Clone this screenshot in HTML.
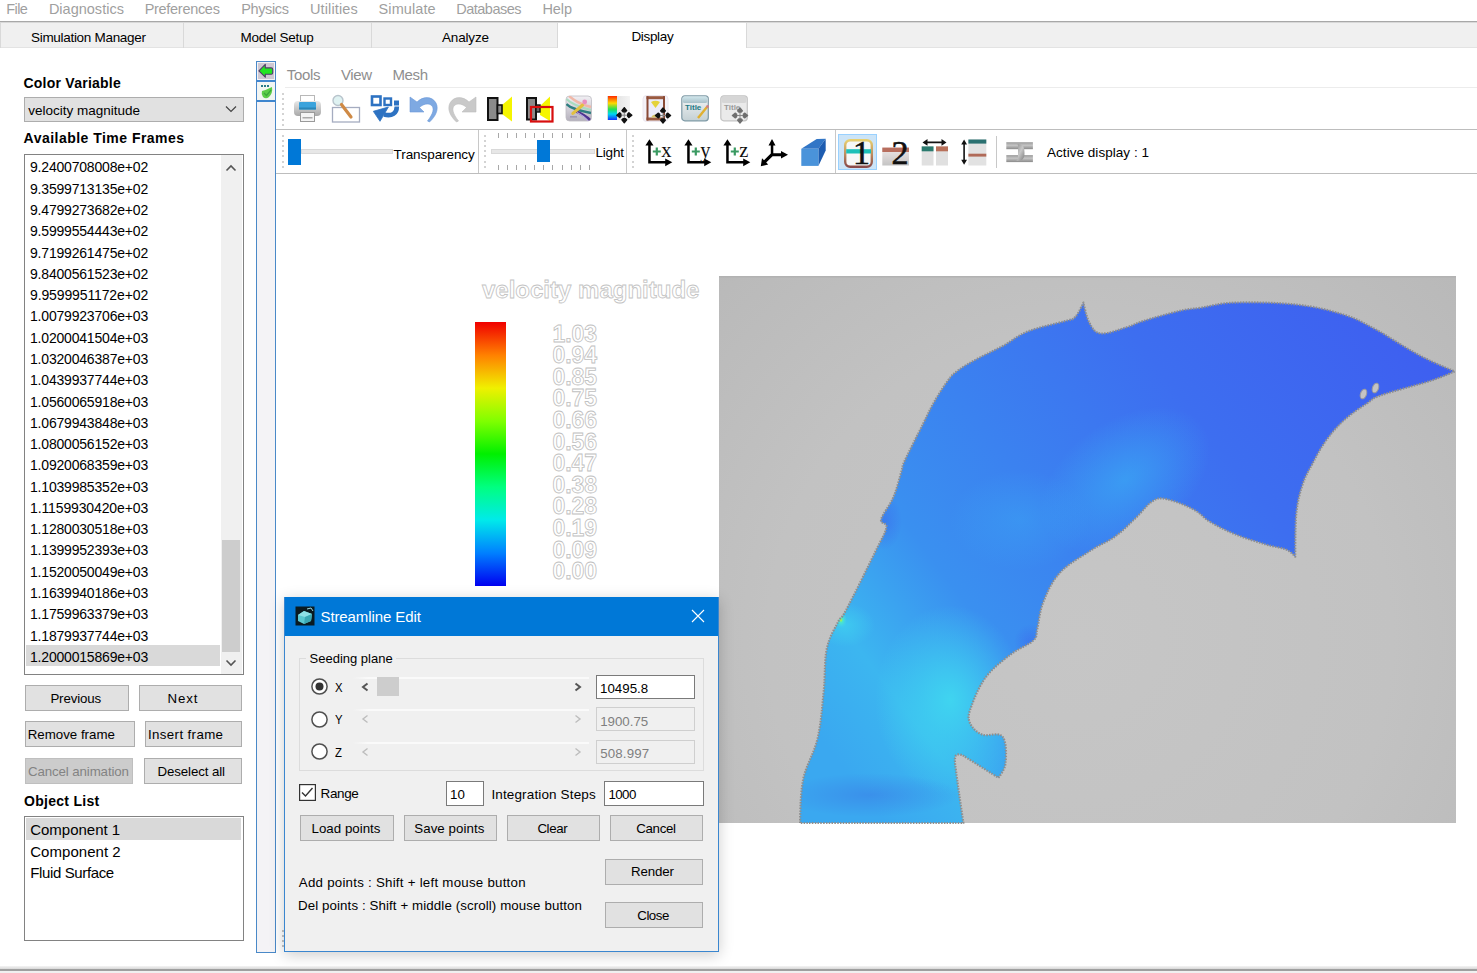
<!DOCTYPE html>
<html><head><meta charset="utf-8"><style>
html,body{margin:0;padding:0;}
body{width:1477px;height:973px;overflow:hidden;position:relative;background:#fff;font-family:"Liberation Sans", sans-serif;}
div{box-sizing:border-box;}
svg{position:absolute;overflow:visible;}
</style></head><body>
<div style="position:absolute;left:6.2px;top:1.53px;font-size:14.5px;line-height:14.5px;color:#9f9f9f;font-weight:normal;white-space:pre;letter-spacing:-0.558px;">File</div>
<div style="position:absolute;left:48.9px;top:1.53px;font-size:14.5px;line-height:14.5px;color:#9f9f9f;font-weight:normal;white-space:pre;letter-spacing:0.005px;">Diagnostics</div>
<div style="position:absolute;left:144.7px;top:1.53px;font-size:14.5px;line-height:14.5px;color:#9f9f9f;font-weight:normal;white-space:pre;letter-spacing:-0.299px;">Preferences</div>
<div style="position:absolute;left:241.2px;top:1.53px;font-size:14.5px;line-height:14.5px;color:#9f9f9f;font-weight:normal;white-space:pre;letter-spacing:-0.361px;">Physics</div>
<div style="position:absolute;left:310.0px;top:1.53px;font-size:14.5px;line-height:14.5px;color:#9f9f9f;font-weight:normal;white-space:pre;letter-spacing:0.121px;">Utilities</div>
<div style="position:absolute;left:378.6px;top:1.53px;font-size:14.5px;line-height:14.5px;color:#9f9f9f;font-weight:normal;white-space:pre;letter-spacing:0.083px;">Simulate</div>
<div style="position:absolute;left:456.2px;top:1.53px;font-size:14.5px;line-height:14.5px;color:#9f9f9f;font-weight:normal;white-space:pre;letter-spacing:-0.491px;">Databases</div>
<div style="position:absolute;left:542.5px;top:1.53px;font-size:14.5px;line-height:14.5px;color:#9f9f9f;font-weight:normal;white-space:pre;letter-spacing:-0.109px;">Help</div>
<div style="position:absolute;left:0px;top:21px;width:1477px;height:1px;background:#a8a8a8"></div>
<div style="position:absolute;left:0px;top:22px;width:1477px;height:1px;background:#d8d8d8"></div>
<div style="position:absolute;left:0px;top:23px;width:1477px;height:25px;background:#f0f0f0"></div>
<div style="position:absolute;left:0px;top:47px;width:558px;height:1px;background:#e3e3e3"></div>
<div style="position:absolute;left:746px;top:47px;width:731px;height:1px;background:#e3e3e3"></div>
<div style="position:absolute;left:0px;top:23px;width:1px;height:25px;background:#d9d9d9"></div>
<div style="position:absolute;left:183px;top:23px;width:1px;height:25px;background:#d9d9d9"></div>
<div style="position:absolute;left:371px;top:23px;width:1px;height:25px;background:#d9d9d9"></div>
<div style="position:absolute;left:558px;top:23px;width:188px;height:26px;background:#fff"></div>
<div style="position:absolute;left:557px;top:23px;width:1px;height:25px;background:#d9d9d9"></div>
<div style="position:absolute;left:746px;top:23px;width:1px;height:25px;background:#d9d9d9"></div>
<div style="position:absolute;left:31px;top:30.57px;font-size:13.5px;line-height:13.5px;color:#000;font-weight:normal;white-space:pre;letter-spacing:-0.299px;">Simulation Manager</div>
<div style="position:absolute;left:240.6px;top:30.57px;font-size:13.5px;line-height:13.5px;color:#000;font-weight:normal;white-space:pre;letter-spacing:-0.261px;">Model Setup</div>
<div style="position:absolute;left:442px;top:30.57px;font-size:13.5px;line-height:13.5px;color:#000;font-weight:normal;white-space:pre;letter-spacing:-0.172px;">Analyze</div>
<div style="position:absolute;left:631.4px;top:29.77px;font-size:13.5px;line-height:13.5px;color:#000;font-weight:normal;white-space:pre;letter-spacing:-0.328px;">Display</div>
<div style="position:absolute;left:23.4px;top:75.65px;font-size:14px;line-height:14px;color:#000;font-weight:bold;white-space:pre;letter-spacing:0.250px;">Color Variable</div>
<div style="position:absolute;left:24px;top:97px;width:220px;height:25px;background:#e1e1e1;border:1px solid #adadad"></div>
<div style="position:absolute;left:28.2px;top:104.07px;font-size:13.5px;line-height:13.5px;color:#000;font-weight:normal;white-space:pre;letter-spacing:-0.001px;">velocity magnitude</div>
<svg style="left:225px;top:105px" width="12" height="8"><polyline points="1,1.5 6,6.5 11,1.5" fill="none" stroke="#444" stroke-width="1.2"/></svg>
<div style="position:absolute;left:23.6px;top:131.45px;font-size:14px;line-height:14px;color:#000;font-weight:bold;white-space:pre;letter-spacing:0.477px;">Available Time Frames</div>
<div style="position:absolute;left:24px;top:154px;width:220px;height:521px;background:#fff;border:1px solid #828282"></div>
<div style="position:absolute;left:221px;top:155px;width:21px;height:519px;background:#f0f0f0"></div>
<div style="position:absolute;left:222px;top:540px;width:18px;height:112px;background:#cdcdcd"></div>
<svg style="left:225px;top:164px" width="12" height="8"><polyline points="1.5,6.5 6,2 10.5,6.5" fill="none" stroke="#555" stroke-width="1.6"/></svg>
<svg style="left:225px;top:659px" width="12" height="8"><polyline points="1.5,1.5 6,6 10.5,1.5" fill="none" stroke="#555" stroke-width="1.6"/></svg>
<div style="position:absolute;left:26px;top:645px;width:194px;height:21px;background:#d9d9d9"></div>
<div style="position:absolute;left:30px;top:160.45px;font-size:14px;line-height:14px;color:#000;font-weight:normal;white-space:pre;letter-spacing:-0.192px;">9.2400708008e+02</div>
<div style="position:absolute;left:30px;top:181.73px;font-size:14px;line-height:14px;color:#000;font-weight:normal;white-space:pre;letter-spacing:-0.192px;">9.3599713135e+02</div>
<div style="position:absolute;left:30px;top:203.01px;font-size:14px;line-height:14px;color:#000;font-weight:normal;white-space:pre;letter-spacing:-0.192px;">9.4799273682e+02</div>
<div style="position:absolute;left:30px;top:224.29px;font-size:14px;line-height:14px;color:#000;font-weight:normal;white-space:pre;letter-spacing:-0.192px;">9.5999554443e+02</div>
<div style="position:absolute;left:30px;top:245.57px;font-size:14px;line-height:14px;color:#000;font-weight:normal;white-space:pre;letter-spacing:-0.192px;">9.7199261475e+02</div>
<div style="position:absolute;left:30px;top:266.85px;font-size:14px;line-height:14px;color:#000;font-weight:normal;white-space:pre;letter-spacing:-0.192px;">9.8400561523e+02</div>
<div style="position:absolute;left:30px;top:288.13px;font-size:14px;line-height:14px;color:#000;font-weight:normal;white-space:pre;letter-spacing:-0.123px;">9.9599951172e+02</div>
<div style="position:absolute;left:30px;top:309.41px;font-size:14px;line-height:14px;color:#000;font-weight:normal;white-space:pre;letter-spacing:-0.192px;">1.0079923706e+03</div>
<div style="position:absolute;left:30px;top:330.69px;font-size:14px;line-height:14px;color:#000;font-weight:normal;white-space:pre;letter-spacing:-0.192px;">1.0200041504e+03</div>
<div style="position:absolute;left:30px;top:351.97px;font-size:14px;line-height:14px;color:#000;font-weight:normal;white-space:pre;letter-spacing:-0.192px;">1.0320046387e+03</div>
<div style="position:absolute;left:30px;top:373.25px;font-size:14px;line-height:14px;color:#000;font-weight:normal;white-space:pre;letter-spacing:-0.192px;">1.0439937744e+03</div>
<div style="position:absolute;left:30px;top:394.53px;font-size:14px;line-height:14px;color:#000;font-weight:normal;white-space:pre;letter-spacing:-0.192px;">1.0560065918e+03</div>
<div style="position:absolute;left:30px;top:415.81px;font-size:14px;line-height:14px;color:#000;font-weight:normal;white-space:pre;letter-spacing:-0.192px;">1.0679943848e+03</div>
<div style="position:absolute;left:30px;top:437.09px;font-size:14px;line-height:14px;color:#000;font-weight:normal;white-space:pre;letter-spacing:-0.192px;">1.0800056152e+03</div>
<div style="position:absolute;left:30px;top:458.37px;font-size:14px;line-height:14px;color:#000;font-weight:normal;white-space:pre;letter-spacing:-0.192px;">1.0920068359e+03</div>
<div style="position:absolute;left:30px;top:479.65px;font-size:14px;line-height:14px;color:#000;font-weight:normal;white-space:pre;letter-spacing:-0.192px;">1.1039985352e+03</div>
<div style="position:absolute;left:30px;top:500.93px;font-size:14px;line-height:14px;color:#000;font-weight:normal;white-space:pre;letter-spacing:-0.123px;">1.1159930420e+03</div>
<div style="position:absolute;left:30px;top:522.21px;font-size:14px;line-height:14px;color:#000;font-weight:normal;white-space:pre;letter-spacing:-0.192px;">1.1280030518e+03</div>
<div style="position:absolute;left:30px;top:543.49px;font-size:14px;line-height:14px;color:#000;font-weight:normal;white-space:pre;letter-spacing:-0.192px;">1.1399952393e+03</div>
<div style="position:absolute;left:30px;top:564.77px;font-size:14px;line-height:14px;color:#000;font-weight:normal;white-space:pre;letter-spacing:-0.192px;">1.1520050049e+03</div>
<div style="position:absolute;left:30px;top:586.05px;font-size:14px;line-height:14px;color:#000;font-weight:normal;white-space:pre;letter-spacing:-0.192px;">1.1639940186e+03</div>
<div style="position:absolute;left:30px;top:607.33px;font-size:14px;line-height:14px;color:#000;font-weight:normal;white-space:pre;letter-spacing:-0.192px;">1.1759963379e+03</div>
<div style="position:absolute;left:30px;top:628.61px;font-size:14px;line-height:14px;color:#000;font-weight:normal;white-space:pre;letter-spacing:-0.192px;">1.1879937744e+03</div>
<div style="position:absolute;left:30px;top:649.89px;font-size:14px;line-height:14px;color:#000;font-weight:normal;white-space:pre;letter-spacing:-0.192px;">1.2000015869e+03</div>
<div style="position:absolute;left:25px;top:685px;width:104px;height:26px;background:#e1e1e1;border:1px solid #adadad"></div>
<div style="position:absolute;left:50.4px;top:692.24px;font-size:13.3px;line-height:13.3px;color:#000;font-weight:normal;white-space:pre;letter-spacing:-0.148px;">Previous</div>
<div style="position:absolute;left:139px;top:685px;width:103px;height:26px;background:#e1e1e1;border:1px solid #adadad"></div>
<div style="position:absolute;left:167.5px;top:692.24px;font-size:13.3px;line-height:13.3px;color:#000;font-weight:normal;white-space:pre;letter-spacing:0.885px;">Next</div>
<div style="position:absolute;left:25px;top:721px;width:110px;height:26px;background:#e1e1e1;border:1px solid #adadad"></div>
<div style="position:absolute;left:27.7px;top:728.24px;font-size:13.3px;line-height:13.3px;color:#000;font-weight:normal;white-space:pre;letter-spacing:-0.000px;">Remove frame</div>
<div style="position:absolute;left:145px;top:721px;width:97px;height:26px;background:#e1e1e1;border:1px solid #adadad"></div>
<div style="position:absolute;left:148px;top:728.24px;font-size:13.3px;line-height:13.3px;color:#000;font-weight:normal;white-space:pre;letter-spacing:0.368px;">Insert frame</div>
<div style="position:absolute;left:25px;top:758px;width:108px;height:26px;background:#cccccc;border:1px solid #bfbfbf"></div>
<div style="position:absolute;left:28px;top:765.24px;font-size:13.3px;line-height:13.3px;color:#838383;font-weight:normal;white-space:pre;letter-spacing:-0.117px;">Cancel animation</div>
<div style="position:absolute;left:144px;top:758px;width:98px;height:26px;background:#e1e1e1;border:1px solid #adadad"></div>
<div style="position:absolute;left:157.5px;top:765.24px;font-size:13.3px;line-height:13.3px;color:#000;font-weight:normal;white-space:pre;letter-spacing:-0.112px;">Deselect all</div>
<div style="position:absolute;left:24px;top:794.15px;font-size:14px;line-height:14px;color:#000;font-weight:bold;white-space:pre;letter-spacing:0.294px;">Object List</div>
<div style="position:absolute;left:24px;top:816px;width:220px;height:125px;background:#fff;border:1px solid #828282"></div>
<div style="position:absolute;left:26px;top:818px;width:215px;height:22px;background:#d9d9d9"></div>
<div style="position:absolute;left:30.2px;top:822.30px;font-size:15px;line-height:15px;color:#000;font-weight:normal;white-space:pre;letter-spacing:-0.006px;">Component 1</div>
<div style="position:absolute;left:30.2px;top:843.50px;font-size:15px;line-height:15px;color:#000;font-weight:normal;white-space:pre;letter-spacing:0.044px;">Component 2</div>
<div style="position:absolute;left:30.2px;top:864.70px;font-size:15px;line-height:15px;color:#000;font-weight:normal;white-space:pre;letter-spacing:-0.365px;">Fluid Surface</div>
<div style="position:absolute;left:256px;top:61px;width:20px;height:892px;background:#f4f3f6;border:1px solid #4a89c8"></div>
<svg style="left:257px;top:62px" width="18" height="18"><rect x="1" y="1" width="16" height="16" fill="#cfc8d2"/><path d="M1.9,8.8 L8.3,2.4 L8.3,5.9 L14.2,5.9 Q15.7,5.9 15.7,7.4 L15.7,10.8 Q15.7,12.3 14.2,12.3 L8.3,12.3 L8.3,15.2 Z" fill="#22e622" stroke="#503a6a" stroke-width="1.1" stroke-linejoin="round"/></svg>
<div style="position:absolute;left:257px;top:80px;width:18px;height:2px;background:#3f86cf"></div>
<svg style="left:257px;top:82px" width="18" height="18"><rect x="1" y="1" width="16" height="17" fill="#f2f6f2"/><path d="M4,4 L13,4" stroke="#2a7a8a" stroke-width="2" stroke-dasharray="2 1"/><path d="M5,9 Q9,8 15,5 Q16,11 12,15 Q9,17.5 6,15 Q4,12 5,9 Z" fill="#5ccc48"/><path d="M7,11 L9.5,13.5 L14,8" stroke="#3aa83a" stroke-width="1.2" fill="none"/></svg>
<div style="position:absolute;left:257px;top:100px;width:18px;height:2px;background:#3f86cf"></div>
<div style="position:absolute;left:286.7px;top:66.90px;font-size:15px;line-height:15px;color:#8e8e8e;font-weight:normal;white-space:pre;letter-spacing:-0.283px;">Tools</div>
<div style="position:absolute;left:340.9px;top:66.90px;font-size:15px;line-height:15px;color:#8e8e8e;font-weight:normal;white-space:pre;letter-spacing:-0.317px;">View</div>
<div style="position:absolute;left:392.5px;top:66.90px;font-size:15px;line-height:15px;color:#8e8e8e;font-weight:normal;white-space:pre;letter-spacing:-0.396px;">Mesh</div>
<div style="position:absolute;left:285px;top:87px;width:1192px;height:1px;background:#ececec"></div>
<div style="position:absolute;left:276px;top:129px;width:1201px;height:1px;background:#bdbdbd"></div>
<div style="position:absolute;left:276px;top:173px;width:1201px;height:1px;background:#bdbdbd"></div>
<div style="position:absolute;left:281.5px;top:93.0px;width:2px;height:2px;background:#c4c4c4;border-radius:1px"></div>
<div style="position:absolute;left:281.5px;top:98.1px;width:2px;height:2px;background:#c4c4c4;border-radius:1px"></div>
<div style="position:absolute;left:281.5px;top:103.2px;width:2px;height:2px;background:#c4c4c4;border-radius:1px"></div>
<div style="position:absolute;left:281.5px;top:108.3px;width:2px;height:2px;background:#c4c4c4;border-radius:1px"></div>
<div style="position:absolute;left:281.5px;top:113.4px;width:2px;height:2px;background:#c4c4c4;border-radius:1px"></div>
<div style="position:absolute;left:281.5px;top:118.5px;width:2px;height:2px;background:#c4c4c4;border-radius:1px"></div>
<div style="position:absolute;left:281.5px;top:123.6px;width:2px;height:2px;background:#c4c4c4;border-radius:1px"></div>
<div style="position:absolute;left:281.5px;top:135.0px;width:2px;height:2px;background:#c4c4c4;border-radius:1px"></div>
<div style="position:absolute;left:281.5px;top:140.1px;width:2px;height:2px;background:#c4c4c4;border-radius:1px"></div>
<div style="position:absolute;left:281.5px;top:145.2px;width:2px;height:2px;background:#c4c4c4;border-radius:1px"></div>
<div style="position:absolute;left:281.5px;top:150.3px;width:2px;height:2px;background:#c4c4c4;border-radius:1px"></div>
<div style="position:absolute;left:281.5px;top:155.4px;width:2px;height:2px;background:#c4c4c4;border-radius:1px"></div>
<div style="position:absolute;left:281.5px;top:160.5px;width:2px;height:2px;background:#c4c4c4;border-radius:1px"></div>
<div style="position:absolute;left:281.5px;top:165.6px;width:2px;height:2px;background:#c4c4c4;border-radius:1px"></div>
<div style="position:absolute;left:483.5px;top:135.0px;width:2px;height:2px;background:#c4c4c4;border-radius:1px"></div>
<div style="position:absolute;left:483.5px;top:140.1px;width:2px;height:2px;background:#c4c4c4;border-radius:1px"></div>
<div style="position:absolute;left:483.5px;top:145.2px;width:2px;height:2px;background:#c4c4c4;border-radius:1px"></div>
<div style="position:absolute;left:483.5px;top:150.3px;width:2px;height:2px;background:#c4c4c4;border-radius:1px"></div>
<div style="position:absolute;left:483.5px;top:155.4px;width:2px;height:2px;background:#c4c4c4;border-radius:1px"></div>
<div style="position:absolute;left:483.5px;top:160.5px;width:2px;height:2px;background:#c4c4c4;border-radius:1px"></div>
<div style="position:absolute;left:483.5px;top:165.6px;width:2px;height:2px;background:#c4c4c4;border-radius:1px"></div>
<div style="position:absolute;left:632px;top:135.0px;width:2px;height:2px;background:#c4c4c4;border-radius:1px"></div>
<div style="position:absolute;left:632px;top:140.1px;width:2px;height:2px;background:#c4c4c4;border-radius:1px"></div>
<div style="position:absolute;left:632px;top:145.2px;width:2px;height:2px;background:#c4c4c4;border-radius:1px"></div>
<div style="position:absolute;left:632px;top:150.3px;width:2px;height:2px;background:#c4c4c4;border-radius:1px"></div>
<div style="position:absolute;left:632px;top:155.4px;width:2px;height:2px;background:#c4c4c4;border-radius:1px"></div>
<div style="position:absolute;left:632px;top:160.5px;width:2px;height:2px;background:#c4c4c4;border-radius:1px"></div>
<div style="position:absolute;left:632px;top:165.6px;width:2px;height:2px;background:#c4c4c4;border-radius:1px"></div>
<div style="position:absolute;left:477.5px;top:130px;width:1px;height:43px;background:#c8c8c8"></div>
<div style="position:absolute;left:626px;top:130px;width:1px;height:43px;background:#c8c8c8"></div>
<div style="position:absolute;left:835px;top:130px;width:1px;height:43px;background:#c8c8c8"></div>
<div style="position:absolute;left:996px;top:136px;width:1px;height:32px;background:#c8c8c8"></div>
<div style="position:absolute;left:301px;top:149px;width:92px;height:5px;background:#e7e7e7;border:1px solid #d9d9d9"></div>
<div style="position:absolute;left:288px;top:139px;width:13px;height:26px;background:#0078d7"></div>
<div style="position:absolute;left:393.6px;top:147.57px;font-size:13.5px;line-height:13.5px;color:#000;font-weight:normal;white-space:pre;letter-spacing:-0.077px;">Transparency</div>
<div style="position:absolute;left:497.5px;top:133px;width:1px;height:5px;background:#a8a8a8"></div>
<div style="position:absolute;left:497.5px;top:165px;width:1px;height:5px;background:#a8a8a8"></div>
<div style="position:absolute;left:506.65px;top:133px;width:1px;height:5px;background:#a8a8a8"></div>
<div style="position:absolute;left:506.65px;top:165px;width:1px;height:5px;background:#a8a8a8"></div>
<div style="position:absolute;left:515.8px;top:133px;width:1px;height:5px;background:#a8a8a8"></div>
<div style="position:absolute;left:515.8px;top:165px;width:1px;height:5px;background:#a8a8a8"></div>
<div style="position:absolute;left:524.95px;top:133px;width:1px;height:5px;background:#a8a8a8"></div>
<div style="position:absolute;left:524.95px;top:165px;width:1px;height:5px;background:#a8a8a8"></div>
<div style="position:absolute;left:534.1px;top:133px;width:1px;height:5px;background:#a8a8a8"></div>
<div style="position:absolute;left:534.1px;top:165px;width:1px;height:5px;background:#a8a8a8"></div>
<div style="position:absolute;left:543.25px;top:133px;width:1px;height:5px;background:#a8a8a8"></div>
<div style="position:absolute;left:543.25px;top:165px;width:1px;height:5px;background:#a8a8a8"></div>
<div style="position:absolute;left:552.4px;top:133px;width:1px;height:5px;background:#a8a8a8"></div>
<div style="position:absolute;left:552.4px;top:165px;width:1px;height:5px;background:#a8a8a8"></div>
<div style="position:absolute;left:561.55px;top:133px;width:1px;height:5px;background:#a8a8a8"></div>
<div style="position:absolute;left:561.55px;top:165px;width:1px;height:5px;background:#a8a8a8"></div>
<div style="position:absolute;left:570.7px;top:133px;width:1px;height:5px;background:#a8a8a8"></div>
<div style="position:absolute;left:570.7px;top:165px;width:1px;height:5px;background:#a8a8a8"></div>
<div style="position:absolute;left:579.85px;top:133px;width:1px;height:5px;background:#a8a8a8"></div>
<div style="position:absolute;left:579.85px;top:165px;width:1px;height:5px;background:#a8a8a8"></div>
<div style="position:absolute;left:589.0px;top:133px;width:1px;height:5px;background:#a8a8a8"></div>
<div style="position:absolute;left:589.0px;top:165px;width:1px;height:5px;background:#a8a8a8"></div>
<div style="position:absolute;left:491px;top:149px;width:104px;height:5px;background:#e7e7e7;border:1px solid #d9d9d9"></div>
<div style="position:absolute;left:537px;top:140px;width:13px;height:22px;background:#0078d7"></div>
<div style="position:absolute;left:595.5px;top:145.87px;font-size:13.5px;line-height:13.5px;color:#000;font-weight:normal;white-space:pre;letter-spacing:-0.195px;">Light</div>
<div style="position:absolute;left:838px;top:134px;width:39px;height:36px;background:#cce4f7;border:1px solid #99d1ff"></div>
<div style="position:absolute;left:1047px;top:145.77px;font-size:13.5px;line-height:13.5px;color:#000;font-weight:normal;white-space:pre;letter-spacing:0.041px;">Active display : 1</div>
<svg style="left:293px;top:94px" width="30" height="30">
<defs><linearGradient id="pb" x1="0" y1="0" x2="0" y2="1"><stop offset="0" stop-color="#e8e8e8"/><stop offset="1" stop-color="#a8a8a8"/></linearGradient></defs>
<rect x="7.5" y="1.5" width="14" height="8" fill="#fff" stroke="#b8b8b8"/>
<rect x="1" y="7" width="27" height="15" rx="4" fill="url(#pb)"/>
<rect x="6" y="8" width="17" height="7.5" rx="1" fill="#3ba3dc"/>
<rect x="6" y="13.5" width="17" height="2" fill="#2a86b8"/>
<rect x="7.5" y="18.5" width="14" height="9" fill="#f4f4f4" stroke="#9a9a9a"/>
<rect x="9.5" y="23" width="10" height="1.5" fill="#aaa"/>
</svg>
<svg style="left:331px;top:94px" width="30" height="30">
<rect x="1.5" y="13.5" width="27" height="14.5" fill="#fff" stroke="#a5acc0" stroke-width="1.3"/>
<circle cx="7" cy="6.5" r="5" fill="#dff2f2" stroke="#b8c4cc" stroke-width="1.4"/>
<line x1="10.5" y1="10.5" x2="20" y2="23" stroke="#cf8a45" stroke-width="3.2" stroke-linecap="round"/>
</svg>
<svg style="left:370px;top:94px" width="30" height="30">
<rect x="2" y="2.5" width="8.5" height="8.5" fill="none" stroke="#2d72c2" stroke-width="2.6"/>
<rect x="14.5" y="4.5" width="6.5" height="6.5" fill="none" stroke="#2d72c2" stroke-width="2.4"/>
<rect x="24" y="6.5" width="5" height="5" fill="#2d72c2"/>
<path d="M26.8,12.5 C26.8,19.5 22,22.5 14,20.5" fill="none" stroke="#2d72c2" stroke-width="4.6"/><polygon points="3.3,17.3 18.4,13 10,27.3" fill="#2d72c2" stroke="#2d72c2" stroke-width="0.8" stroke-linejoin="round"/>
</svg>
<svg style="left:409px;top:95px" width="30" height="28">
<path d="M1,2 L1,17 L15,17 L10.5,12.5 C14,9 19,8 22,10 C26,13 24,19 18.5,26 L20.5,27 C27,21 30,14 27,8 C23,1 14,1 8,7 Z" fill="#7ea9e2" stroke="#6b98d8" stroke-width="0.6"/>
</svg>
<svg style="left:447px;top:95px" width="30" height="28">
<path d="M29,2 L29,17 L15,17 L19.5,12.5 C16,9 11,8 8,10 C4,13 6,19 11.5,26 L9.5,27 C3,21 0,14 3,8 C7,1 16,1 22,7 Z" fill="#c9c9c9" stroke="#bdbdbd" stroke-width="0.6"/>
</svg>
<svg style="left:486px;top:95px" width="28" height="28">
<polygon points="16,10 26,1.5 26,26.5 16,19" fill="#f5f500"/>
<rect x="2" y="3" width="9.5" height="22" fill="#8a8a8a" stroke="#111" stroke-width="2"/>
<rect x="11.5" y="10" width="4.5" height="8.5" fill="#8a8a8a" stroke="#111" stroke-width="1.6"/>
</svg>
<svg style="left:525px;top:95px" width="30" height="30">
<polygon points="15,11 25,1.5 25,26 15,20" fill="#f5f500"/>
<rect x="2" y="3" width="9" height="21.5" fill="#8a8a8a" stroke="#111" stroke-width="2"/>
<rect x="11" y="10" width="4" height="7" fill="#666" stroke="#111" stroke-width="1.4"/>
<rect x="6" y="12" width="21.5" height="14.5" fill="none" stroke="#d80e0e" stroke-width="2.2"/>
</svg>
<svg style="left:565px;top:95px" width="28" height="28">
<defs><linearGradient id="sg" x1="0" y1="0" x2="0" y2="1"><stop offset="0" stop-color="#f2f0f4"/><stop offset="1" stop-color="#b4b0bc"/></linearGradient>
<clipPath id="sgc"><rect x="1" y="1" width="25.5" height="25" rx="3.5"/></clipPath></defs>
<rect x="1" y="1" width="25.5" height="25" rx="3.5" fill="url(#sg)" stroke="#bdbbc2" stroke-width="0.8"/>
<g clip-path="url(#sgc)" fill="none">
<path d="M4,1 C9,5 14,9 26,12" stroke="#f0b8a8" stroke-width="2.4"/>
<path d="M1.5,4 C6,9 14,12 26,15" stroke="#a8dcc0" stroke-width="2.2"/>
<path d="M1.5,9 C5,13 12,15 26,18" stroke="#2e7e80" stroke-width="2.4"/>
<path d="M10,16 C15,18 20,20 25,25" stroke="#4e3290" stroke-width="2.6"/>
<path d="M12,17.5 C16,19.5 20,22 23,26" stroke="#b8a8e0" stroke-width="1.2"/>
</g>
<line x1="7.9" y1="18.4" x2="17.4" y2="10.2" stroke="#e2c040" stroke-width="3.2" stroke-linecap="round"/>
<circle cx="19.7" cy="6.9" r="2.4" fill="#e890c0"/>
<rect x="5" y="21" width="7" height="1.6" fill="#9088a8" opacity="0.7"/>
</svg>
<svg style="left:606px;top:94px" width="30" height="32">
<defs><linearGradient id="cg" x1="0" y1="0" x2="0" y2="1"><stop offset="0" stop-color="#ff2a00"/><stop offset="0.3" stop-color="#ffd800"/><stop offset="0.55" stop-color="#22e050"/><stop offset="0.75" stop-color="#00d8f0"/><stop offset="1" stop-color="#1030ff"/></linearGradient>
<linearGradient id="cgb" x1="0" y1="0" x2="1" y2="0"><stop offset="0" stop-color="#d8d8d8"/><stop offset="1" stop-color="#f4f4f4"/></linearGradient></defs>
<rect x="1" y="2" width="23" height="24" fill="url(#cgb)"/>
<rect x="2" y="2" width="9" height="24" fill="url(#cg)"/>
<g transform="translate(18.3,21.2) scale(1.0)"><path d="M-3.5,0 L3.5,0 M0,-3.5 L0,3.5" stroke="#888" stroke-width="1"/><path d="M0,-7.6 L2.4,-4.6 L1.2,-3.4 L-1.2,-3.4 L-2.4,-4.6 Z M0,7.6 L2.4,4.6 L1.2,3.4 L-1.2,3.4 L-2.4,4.6 Z M-7.6,0 L-4.6,2.4 L-3.4,1.2 L-3.4,-1.2 L-4.6,-2.4 Z M7.6,0 L4.6,2.4 L3.4,1.2 L3.4,-1.2 L4.6,-2.4 Z" fill="#111" stroke="#111" stroke-width="1.3" stroke-linejoin="round"/></g>
</svg>
<svg style="left:642px;top:94px" width="30" height="32">
<rect x="1" y="1.5" width="25" height="26" rx="3.5" fill="#f4f2f8" stroke="#ece6ee"/>
<rect x="6" y="4.5" width="15.5" height="20" fill="#ecebf8"/>
<rect x="4.5" y="2.2" width="18.5" height="3" fill="#9a5a40"/>
<rect x="4.5" y="23.5" width="18.5" height="3" fill="#9a5a40"/>
<rect x="4.5" y="2.2" width="2" height="24.3" fill="#8a4a36"/>
<rect x="21" y="2.2" width="2" height="24.3" fill="#8a4a36"/>
<path d="M9,8 Q13.5,5.5 18,8 L13.5,14 Z" fill="#e4d23a"/>
<path d="M9,23.5 Q12,17.5 19,23.5 Z" fill="#d8c468"/>
<g transform="translate(21,21.5) scale(1.0)"><path d="M-3.5,0 L3.5,0 M0,-3.5 L0,3.5" stroke="#888" stroke-width="1"/><path d="M0,-7.6 L2.4,-4.6 L1.2,-3.4 L-1.2,-3.4 L-2.4,-4.6 Z M0,7.6 L2.4,4.6 L1.2,3.4 L-1.2,3.4 L-2.4,4.6 Z M-7.6,0 L-4.6,2.4 L-3.4,1.2 L-3.4,-1.2 L-4.6,-2.4 Z M7.6,0 L4.6,2.4 L3.4,1.2 L3.4,-1.2 L4.6,-2.4 Z" fill="#111" stroke="#111" stroke-width="1.3" stroke-linejoin="round"/></g>
</svg>
<svg style="left:681px;top:95px" width="30" height="28">
<defs><linearGradient id="tg" x1="0" y1="0" x2="0" y2="1"><stop offset="0" stop-color="#cfe6ec"/><stop offset="1" stop-color="#a8c0c8"/></linearGradient>
<linearGradient id="tb" x1="0" y1="0" x2="0" y2="1"><stop offset="0" stop-color="#f4f6f6"/><stop offset="1" stop-color="#c4d0d4"/></linearGradient></defs>
<rect x="0.8" y="0.8" width="26.5" height="25" rx="3" fill="url(#tb)" stroke="#7f9aa6" stroke-width="1.2"/>
<rect x="1.5" y="1.5" width="25" height="6.5" rx="2" fill="url(#tg)"/>
<text x="4" y="15" font-family="Liberation Sans" font-weight="bold" font-size="8" fill="#1f7a86">Title</text>
<line x1="17" y1="23" x2="26" y2="12" stroke="#e0b030" stroke-width="2.4"/>
<circle cx="26.5" cy="11.5" r="1.5" fill="#d08080"/>
</svg>
<svg style="left:720px;top:95px" width="30" height="30">
<rect x="0.8" y="0.8" width="26.5" height="25" rx="3" fill="#eaeaea" stroke="#c4c4c4" stroke-width="1.2"/>
<rect x="1.5" y="1.5" width="25" height="6.5" rx="2" fill="#d6d6d6"/>
<text x="4" y="15" font-family="Liberation Sans" font-weight="bold" font-size="8" fill="#9a9a9a">Title</text>
<g transform="translate(20,20.5) scale(1.0)"><path d="M-3.5,0 L3.5,0 M0,-3.5 L0,3.5" stroke="#888" stroke-width="1"/><path d="M0,-7.6 L2.4,-4.6 L1.2,-3.4 L-1.2,-3.4 L-2.4,-4.6 Z M0,7.6 L2.4,4.6 L1.2,3.4 L-1.2,3.4 L-2.4,4.6 Z M-7.6,0 L-4.6,2.4 L-3.4,1.2 L-3.4,-1.2 L-4.6,-2.4 Z M7.6,0 L4.6,2.4 L3.4,1.2 L3.4,-1.2 L4.6,-2.4 Z" fill="#6f6f6f" stroke="#6f6f6f" stroke-width="1.3" stroke-linejoin="round"/></g>
</svg>
<svg style="left:643.5px;top:138px" width="30" height="30">
<path d="M5.45,1.3 L1.4,7.6 L4.2,7.6 L4.2,25.6 L21.2,25.6 L21.2,28.2 L28.3,24.3 L21.2,20.4 L21.2,23 L6.7,23 L6.7,7.6 L9.5,7.6 Z" fill="#000"/>
<path d="M8.8,13.5 L16.8,13.5 M12.8,9.4 L12.8,17.6" stroke="#3a9a62" stroke-width="2.2"/>
<text x="17.2" y="18.6" font-family="Liberation Serif" font-size="20.5" fill="#111">x</text>
</svg>
<svg style="left:682.5px;top:138px" width="30" height="30">
<path d="M5.45,1.3 L1.4,7.6 L4.2,7.6 L4.2,25.6 L21.2,25.6 L21.2,28.2 L28.3,24.3 L21.2,20.4 L21.2,23 L6.7,23 L6.7,7.6 L9.5,7.6 Z" fill="#000"/>
<path d="M8.8,13.5 L16.8,13.5 M12.8,9.4 L12.8,17.6" stroke="#3a9a62" stroke-width="2.2"/>
<text x="17.2" y="18.6" font-family="Liberation Serif" font-size="20.5" fill="#111">y</text>
</svg>
<svg style="left:721.5px;top:138px" width="30" height="30">
<path d="M5.45,1.3 L1.4,7.6 L4.2,7.6 L4.2,25.6 L21.2,25.6 L21.2,28.2 L28.3,24.3 L21.2,20.4 L21.2,23 L6.7,23 L6.7,7.6 L9.5,7.6 Z" fill="#000"/>
<path d="M8.8,13.5 L16.8,13.5 M12.8,9.4 L12.8,17.6" stroke="#3a9a62" stroke-width="2.2"/>
<text x="17.2" y="18.6" font-family="Liberation Serif" font-size="20.5" fill="#111">z</text>
</svg>
<svg style="left:760px;top:138px" width="30" height="30">
<path d="M12,1 L8.5,7.6 L10.8,7.6 L10.8,15.5 L4,22.3 L2,20.3 L0.8,28.2 L8.2,26.5 L6.2,24.5 L12.6,18.2 L21,18.2 L21,20.6 L28,16.8 L21,13 L21,15.3 L13.3,15.3 L13.3,7.6 L15.5,7.6 Z" fill="#000"/>
</svg>
<svg style="left:799px;top:138px" width="30" height="30">
<polygon points="2.3,10.8 17.7,1.1 26.7,0.7 19.4,10.8" fill="#3276c6"/>
<polygon points="19.4,10.8 26.7,0.7 26.7,12.5 19.4,27.9" fill="#1d5cb0"/>
<rect x="2.3" y="10.8" width="17.1" height="17.1" fill="#4a93da"/>
</svg>
<svg style="left:840px;top:136px" width="36" height="34">
<defs><linearGradient id="d1" x1="0" y1="0" x2="0" y2="1"><stop offset="0" stop-color="#e8d070"/><stop offset="0.5" stop-color="#c09060"/><stop offset="1" stop-color="#8a4a4a"/></linearGradient></defs>
<rect x="5.2" y="4.2" width="26.6" height="26.6" rx="5" fill="#f6f8f8" stroke="url(#d1)" stroke-width="2.4"/>
<rect x="6.2" y="13.2" width="24.8" height="4.3" fill="#1cc0b8"/>
<text x="13" y="28" font-family="Liberation Serif" font-size="34" fill="#111" stroke="#111" stroke-width="0.6">1</text>
</svg>
<svg style="left:880px;top:136px" width="34" height="34">
<defs><linearGradient id="d2" x1="0" y1="0" x2="0" y2="1"><stop offset="0" stop-color="#f0e8e8"/><stop offset="1" stop-color="#c4c4c4"/></linearGradient></defs>
<rect x="2.3" y="11.6" width="26.7" height="17.9" fill="url(#d2)"/>
<rect x="2.3" y="11.6" width="26.7" height="4.4" fill="#b86e5e"/>
<text x="11.5" y="27.5" font-family="Liberation Serif" font-size="34" fill="#111" stroke="#111" stroke-width="0.6">2</text>
</svg>
<svg style="left:920px;top:136px" width="32" height="34">
<path d="M2.5,6.4 L7.5,3 L7.5,5.6 L21.5,5.6 L21.5,3 L26.5,6.4 L21.5,9.8 L21.5,7.2 L7.5,7.2 L7.5,9.8 Z" fill="#111"/>
<rect x="1.7" y="10.4" width="11.8" height="19.1" fill="#e0e0e0"/>
<rect x="1.7" y="10.4" width="11.8" height="4.9" fill="#2a7a6e"/>
<rect x="16" y="10.4" width="12" height="19.1" fill="#e0e0e0"/>
<rect x="16" y="10.4" width="12" height="4.9" fill="#b8705a"/>
</svg>
<svg style="left:958px;top:136px" width="32" height="34">
<path d="M6.1,3.5 L9,8.5 L6.9,8.5 L6.9,23.7 L9,23.7 L6.1,28.7 L3.2,23.7 L5.3,23.7 L5.3,8.5 L3.2,8.5 Z" fill="#111"/>
<rect x="10.4" y="3.5" width="17.9" height="26" fill="#e2e2e2"/>
<rect x="10.4" y="3.5" width="17.9" height="4.1" fill="#2a7070"/>
<rect x="10.4" y="17.7" width="17.9" height="2.9" fill="#b06a58"/>
</svg>
<svg style="left:1005px;top:141px" width="30" height="22">
<defs><linearGradient id="lk" x1="0" y1="0" x2="0" y2="1"><stop offset="0" stop-color="#9a9a9a"/><stop offset="0.45" stop-color="#c4c4c4"/><stop offset="1" stop-color="#8a8a8a"/></linearGradient>
<linearGradient id="lk2" x1="0" y1="0" x2="1" y2="1"><stop offset="0" stop-color="#8a8a8a"/><stop offset="0.5" stop-color="#c8c8c8"/><stop offset="1" stop-color="#7a7a7a"/></linearGradient></defs>
<rect x="1.3" y="1.2" width="26.6" height="7" fill="url(#lk)"/>
<rect x="1.3" y="14.1" width="26.6" height="7" fill="url(#lk)"/>
<path d="M15.5,3 C22,3 23,6 23,12 C23,18 21,20 14,20 C17,20 16.5,17 16.5,11.5 C16.5,6 17,3 15.5,3 Z" fill="url(#lk2)" transform="translate(-3.5,0)"/>
</svg>
<svg style="left:470px;top:270px" width="240" height="330">
<text x="12" y="28.4" font-family="Liberation Sans" font-weight="bold" font-size="24" fill="#fff" stroke="#c4c4c4" stroke-width="0.85">velocity magnitude</text>
</svg>
<svg style="left:474px;top:321px" width="33" height="266">
<defs><linearGradient id="cbar" x1="0" y1="0" x2="0" y2="1">
<stop offset="0" stop-color="#f00000"/><stop offset="0.125" stop-color="#ff8000"/><stop offset="0.25" stop-color="#f0f000"/><stop offset="0.375" stop-color="#80ff00"/>
<stop offset="0.5" stop-color="#00f000"/><stop offset="0.625" stop-color="#00ff80"/><stop offset="0.75" stop-color="#00eaea"/><stop offset="0.875" stop-color="#0080ff"/><stop offset="1" stop-color="#0000f0"/></linearGradient></defs>
<rect x="1" y="1" width="31" height="264" fill="url(#cbar)"/>
</svg>
<svg style="left:540px;top:310px" width="80" height="290"><text x="12.5" y="31.5" font-family="Liberation Sans" font-weight="bold" font-size="23" letter-spacing="-0.1" fill="#fff" stroke="#c0c0c0" stroke-width="0.8">1.03</text><text x="12.5" y="53.1" font-family="Liberation Sans" font-weight="bold" font-size="23" letter-spacing="-0.1" fill="#fff" stroke="#c0c0c0" stroke-width="0.8">0.94</text><text x="12.5" y="74.7" font-family="Liberation Sans" font-weight="bold" font-size="23" letter-spacing="-0.1" fill="#fff" stroke="#c0c0c0" stroke-width="0.8">0.85</text><text x="12.5" y="96.3" font-family="Liberation Sans" font-weight="bold" font-size="23" letter-spacing="-0.1" fill="#fff" stroke="#c0c0c0" stroke-width="0.8">0.75</text><text x="12.5" y="117.9" font-family="Liberation Sans" font-weight="bold" font-size="23" letter-spacing="-0.1" fill="#fff" stroke="#c0c0c0" stroke-width="0.8">0.66</text><text x="12.5" y="139.5" font-family="Liberation Sans" font-weight="bold" font-size="23" letter-spacing="-0.1" fill="#fff" stroke="#c0c0c0" stroke-width="0.8">0.56</text><text x="12.5" y="161.1" font-family="Liberation Sans" font-weight="bold" font-size="23" letter-spacing="-0.1" fill="#fff" stroke="#c0c0c0" stroke-width="0.8">0.47</text><text x="12.5" y="182.7" font-family="Liberation Sans" font-weight="bold" font-size="23" letter-spacing="-0.1" fill="#fff" stroke="#c0c0c0" stroke-width="0.8">0.38</text><text x="12.5" y="204.3" font-family="Liberation Sans" font-weight="bold" font-size="23" letter-spacing="-0.1" fill="#fff" stroke="#c0c0c0" stroke-width="0.8">0.28</text><text x="12.5" y="225.9" font-family="Liberation Sans" font-weight="bold" font-size="23" letter-spacing="-0.1" fill="#fff" stroke="#c0c0c0" stroke-width="0.8">0.19</text><text x="12.5" y="247.5" font-family="Liberation Sans" font-weight="bold" font-size="23" letter-spacing="-0.1" fill="#fff" stroke="#c0c0c0" stroke-width="0.8">0.09</text><text x="12.5" y="269.1" font-family="Liberation Sans" font-weight="bold" font-size="23" letter-spacing="-0.1" fill="#fff" stroke="#c0c0c0" stroke-width="0.8">0.00</text></svg>
<svg style="left:719px;top:276px" width="737" height="547">
<defs>
<linearGradient id="fl" gradientUnits="userSpaceOnUse" x1="701" y1="84" x2="141" y2="514">
<stop offset="0" stop-color="#3e60f0"/><stop offset="0.3" stop-color="#3d6ef0"/><stop offset="0.55" stop-color="#3b82f0"/><stop offset="0.72" stop-color="#3a90f0"/><stop offset="0.88" stop-color="#3cb6f0"/><stop offset="1" stop-color="#3aa8f0"/></linearGradient>
<radialGradient id="h1"><stop offset="0" stop-color="#3aa6f4" stop-opacity="0.75"/><stop offset="1" stop-color="#3aa8f4" stop-opacity="0"/></radialGradient>
<radialGradient id="h2"><stop offset="0" stop-color="#40dcf0" stop-opacity="0.85"/><stop offset="1" stop-color="#40dcf0" stop-opacity="0"/></radialGradient>
<radialGradient id="h3"><stop offset="0" stop-color="#3a86e8" stop-opacity="0.7"/><stop offset="1" stop-color="#3a86e8" stop-opacity="0"/></radialGradient>
<radialGradient id="h4"><stop offset="0" stop-color="#3c62ec" stop-opacity="0.8"/><stop offset="1" stop-color="#3c62ec" stop-opacity="0"/></radialGradient>
<radialGradient id="h5"><stop offset="0" stop-color="#c8f020" stop-opacity="1"/><stop offset="0.3" stop-color="#50f0c0" stop-opacity="0.8"/><stop offset="1" stop-color="#40d8f0" stop-opacity="0"/></radialGradient>
<radialGradient id="vg" gradientUnits="userSpaceOnUse" cx="361" cy="364" r="520"><stop offset="0" stop-color="#c6c6c6"/><stop offset="0.6" stop-color="#c2c2c2"/><stop offset="1" stop-color="#b9b9b9"/></radialGradient>
<clipPath id="fc"><path d="M81.1,547.0 C81.1,547.0 81.0,518.9 84.1,503.7 C87.2,488.5 94.8,478.5 98.5,462.6 C102.2,446.7 103.0,431.6 104.7,415.4 C106.4,399.2 105.2,385.3 107.8,372.8 C110.4,360.3 115.6,353.0 119.1,346.0 C122.6,339.0 120.6,346.3 127.3,333.7 C134.0,321.1 148.9,291.0 156.1,276.2 C163.3,261.4 166.3,257.4 167.4,251.5 C168.5,245.6 160.9,248.8 162.2,243.3 C163.5,237.8 170.9,229.6 174.6,220.7 C178.3,211.8 180.8,200.5 182.8,194.0 C184.8,187.5 181.9,193.1 185.7,184.8 C189.5,176.5 198.9,158.2 204.1,147.8 C209.3,137.5 210.0,135.1 214.4,127.3 C218.8,119.5 224.4,110.6 228.8,104.7 C233.2,98.8 233.5,98.5 239.0,94.4 C244.5,90.3 251.4,86.5 259.6,82.1 C267.8,77.7 275.4,74.5 284.3,69.7 C293.2,64.9 297.8,59.8 308.9,55.4 C320.0,51.0 337.4,47.7 345.9,45.1 C354.4,42.5 352.9,44.3 356.2,41.0 C359.5,37.7 364.4,26.6 364.4,26.6 C364.4,26.6 367.4,41.6 370.6,47.1 C373.7,52.6 375.2,56.6 381.9,57.4 C388.6,58.2 400.0,53.5 407.6,51.3 C415.2,49.1 414.4,48.1 424.0,45.1 C433.6,42.1 450.6,37.2 461.0,34.8 C471.4,32.4 471.8,33.2 481.8,31.7 C491.8,30.2 499.3,27.1 516.7,26.6 C534.1,26.1 558.8,26.5 578.4,28.7 C598.0,30.9 611.5,34.5 625.6,38.9 C639.7,43.3 645.4,47.4 656.5,53.3 C667.6,59.2 677.7,66.3 687.3,71.8 C696.9,77.3 701.2,79.9 709.9,84.1 C718.6,88.3 735.6,95.4 735.6,95.4 C735.6,95.4 725.0,100.4 711.9,104.7 C698.8,109.0 674.1,115.0 662.6,119.1 C651.1,123.2 654.9,122.9 648.2,127.3 C641.5,131.7 633.0,137.0 625.6,143.7 C618.2,150.4 613.1,156.2 607.2,164.3 C601.3,172.4 597.1,180.9 592.8,188.9 C588.5,196.9 586.3,200.0 583.5,208.8 C580.7,217.6 578.6,224.7 577.3,237.6 C576.0,250.5 576.3,280.7 576.3,280.7 C576.3,280.7 572.4,275.7 567.0,273.5 C561.6,271.3 555.8,271.2 546.5,268.4 C537.2,265.6 525.6,262.2 515.6,258.1 C505.6,254.0 498.4,250.2 491.0,245.8 C483.6,241.4 482.3,237.5 474.5,233.4 C466.7,229.3 455.2,224.7 447.8,223.2 C440.4,221.7 439.0,221.9 433.5,225.2 C428.0,228.5 423.7,235.4 417.0,241.7 C410.3,248.0 404.6,254.3 396.5,260.2 C388.4,266.1 381.8,267.9 371.8,274.5 C361.8,281.1 349.5,287.5 341.0,296.7 C332.5,305.9 328.6,315.5 324.5,325.5 C320.4,335.5 320.2,345.2 318.4,352.2 C316.6,359.2 319.1,359.8 314.3,364.5 C309.5,369.2 300.2,371.8 291.7,378.4 C283.2,385.0 274.0,391.8 267.0,401.0 C260.0,410.2 255.6,421.6 252.6,429.7 C249.6,437.8 248.7,441.0 250.6,446.2 C252.5,451.4 257.0,455.9 262.9,458.5 C268.8,461.1 279.3,455.4 283.5,460.6 C287.7,465.8 287.3,479.9 286.5,487.3 C285.7,494.7 279.3,501.7 279.3,501.7 C279.3,501.7 243.4,479.1 243.4,479.1 C243.4,479.1 237.1,476.7 236.2,481.1 C235.3,485.5 236.7,491.8 238.2,503.7 C239.7,515.6 244.4,547.0 244.4,547.0 C244.4,547.0 81.1,547.0 81.1,547.0Z"/></clipPath>
</defs>
<rect x="0" y="0" width="737" height="547" fill="url(#vg)"/>
<rect x="0" y="0" width="737" height="1.5" fill="#b2b2b2"/>
<g clip-path="url(#fc)">
<rect x="0" y="0" width="737" height="547" fill="url(#fl)"/>
<ellipse cx="406" cy="204" rx="95" ry="60" fill="url(#h1)" transform="rotate(-35 406 204)"/>
<ellipse cx="301" cy="244" rx="70" ry="50" fill="url(#h1)" opacity="0.6"/>
<ellipse cx="231" cy="424" rx="75" ry="95" fill="url(#h2)"/>
<ellipse cx="151" cy="519" rx="90" ry="22" fill="url(#h3)"/>
<ellipse cx="165" cy="246" rx="18" ry="28" fill="url(#h4)" opacity="0.6"/>
<ellipse cx="311" cy="366" rx="16" ry="18" fill="url(#h4)" opacity="0.55"/>
<ellipse cx="126" cy="349" rx="30" ry="22" fill="url(#h2)" opacity="0.6"/>
<ellipse cx="122" cy="344" rx="6" ry="8" fill="url(#h5)"/>
</g>
<path d="M81.1,547.0 C81.1,547.0 81.0,518.9 84.1,503.7 C87.2,488.5 94.8,478.5 98.5,462.6 C102.2,446.7 103.0,431.6 104.7,415.4 C106.4,399.2 105.2,385.3 107.8,372.8 C110.4,360.3 115.6,353.0 119.1,346.0 C122.6,339.0 120.6,346.3 127.3,333.7 C134.0,321.1 148.9,291.0 156.1,276.2 C163.3,261.4 166.3,257.4 167.4,251.5 C168.5,245.6 160.9,248.8 162.2,243.3 C163.5,237.8 170.9,229.6 174.6,220.7 C178.3,211.8 180.8,200.5 182.8,194.0 C184.8,187.5 181.9,193.1 185.7,184.8 C189.5,176.5 198.9,158.2 204.1,147.8 C209.3,137.5 210.0,135.1 214.4,127.3 C218.8,119.5 224.4,110.6 228.8,104.7 C233.2,98.8 233.5,98.5 239.0,94.4 C244.5,90.3 251.4,86.5 259.6,82.1 C267.8,77.7 275.4,74.5 284.3,69.7 C293.2,64.9 297.8,59.8 308.9,55.4 C320.0,51.0 337.4,47.7 345.9,45.1 C354.4,42.5 352.9,44.3 356.2,41.0 C359.5,37.7 364.4,26.6 364.4,26.6 C364.4,26.6 367.4,41.6 370.6,47.1 C373.7,52.6 375.2,56.6 381.9,57.4 C388.6,58.2 400.0,53.5 407.6,51.3 C415.2,49.1 414.4,48.1 424.0,45.1 C433.6,42.1 450.6,37.2 461.0,34.8 C471.4,32.4 471.8,33.2 481.8,31.7 C491.8,30.2 499.3,27.1 516.7,26.6 C534.1,26.1 558.8,26.5 578.4,28.7 C598.0,30.9 611.5,34.5 625.6,38.9 C639.7,43.3 645.4,47.4 656.5,53.3 C667.6,59.2 677.7,66.3 687.3,71.8 C696.9,77.3 701.2,79.9 709.9,84.1 C718.6,88.3 735.6,95.4 735.6,95.4 C735.6,95.4 725.0,100.4 711.9,104.7 C698.8,109.0 674.1,115.0 662.6,119.1 C651.1,123.2 654.9,122.9 648.2,127.3 C641.5,131.7 633.0,137.0 625.6,143.7 C618.2,150.4 613.1,156.2 607.2,164.3 C601.3,172.4 597.1,180.9 592.8,188.9 C588.5,196.9 586.3,200.0 583.5,208.8 C580.7,217.6 578.6,224.7 577.3,237.6 C576.0,250.5 576.3,280.7 576.3,280.7 C576.3,280.7 572.4,275.7 567.0,273.5 C561.6,271.3 555.8,271.2 546.5,268.4 C537.2,265.6 525.6,262.2 515.6,258.1 C505.6,254.0 498.4,250.2 491.0,245.8 C483.6,241.4 482.3,237.5 474.5,233.4 C466.7,229.3 455.2,224.7 447.8,223.2 C440.4,221.7 439.0,221.9 433.5,225.2 C428.0,228.5 423.7,235.4 417.0,241.7 C410.3,248.0 404.6,254.3 396.5,260.2 C388.4,266.1 381.8,267.9 371.8,274.5 C361.8,281.1 349.5,287.5 341.0,296.7 C332.5,305.9 328.6,315.5 324.5,325.5 C320.4,335.5 320.2,345.2 318.4,352.2 C316.6,359.2 319.1,359.8 314.3,364.5 C309.5,369.2 300.2,371.8 291.7,378.4 C283.2,385.0 274.0,391.8 267.0,401.0 C260.0,410.2 255.6,421.6 252.6,429.7 C249.6,437.8 248.7,441.0 250.6,446.2 C252.5,451.4 257.0,455.9 262.9,458.5 C268.8,461.1 279.3,455.4 283.5,460.6 C287.7,465.8 287.3,479.9 286.5,487.3 C285.7,494.7 279.3,501.7 279.3,501.7 C279.3,501.7 243.4,479.1 243.4,479.1 C243.4,479.1 237.1,476.7 236.2,481.1 C235.3,485.5 236.7,491.8 238.2,503.7 C239.7,515.6 244.4,547.0 244.4,547.0 C244.4,547.0 81.1,547.0 81.1,547.0Z" fill="none" stroke="#8e8e8e" stroke-width="2.2" stroke-dasharray="1.5 1.3" stroke-linejoin="round"/>
<ellipse cx="644.5" cy="118" rx="3" ry="5" fill="#c4c4c4" stroke="#9c9c9c" stroke-width="1" transform="rotate(20 644.5 118)"/>
<ellipse cx="656.5" cy="112" rx="3" ry="5" fill="#c4c4c4" stroke="#9c9c9c" stroke-width="1" transform="rotate(20 656.5 112)"/>
</svg>
<div style="position:absolute;left:284px;top:597px;width:435px;height:355px;background:#f0f0f0;border:1px solid #3a86cf;box-shadow:0 3px 14px rgba(0,0,0,0.2)"></div>
<div style="position:absolute;left:285px;top:597px;width:433px;height:38.5px;background:#0078d7"></div>
<svg style="left:295px;top:606px" width="20" height="20">
<rect x="0.5" y="0.5" width="19" height="19" fill="#0a1a20"/>
<path d="M3,9 L9,5 L17,8 L16,15 L9,18 L3,15 Z" fill="#5ac8d0"/>
<path d="M9,5 L17,8 L10,11 L3,9 Z" fill="#8ee0e6"/>
<path d="M10,11 L17,8 L16,15 L9,18 Z" fill="#3aa8b4"/>
<path d="M12,3 L16,2 L18,5" stroke="#9ad8e0" stroke-width="1" fill="none"/>
</svg>
<div style="position:absolute;left:320.5px;top:609.00px;font-size:15px;line-height:15px;color:#fff;font-weight:normal;white-space:pre;letter-spacing:-0.101px;">Streamline Edit</div>
<svg style="left:691px;top:609px" width="14" height="14"><path d="M1,1 L13,13 M13,1 L1,13" stroke="#fff" stroke-width="1.1"/></svg>
<div style="position:absolute;left:299px;top:658px;width:405px;height:113px;border:1px solid #dcdcdc"></div>
<div style="position:absolute;left:306px;top:652px;width:90px;height:10px;background:#f0f0f0"></div>
<div style="position:absolute;left:309.5px;top:652.30px;font-size:13px;line-height:13px;color:#000;font-weight:normal;white-space:pre;letter-spacing:0.005px;">Seeding plane</div>
<svg style="left:311px;top:678.0px" width="17" height="17"><circle cx="8.5" cy="8.5" r="7.6" fill="#fff" stroke="#505050" stroke-width="1.5"/><circle cx="8.5" cy="8.5" r="4" fill="#333"/></svg>
<div style="position:absolute;left:334.5px;top:680.57px;font-size:13.5px;line-height:13.5px;color:#000;font-weight:normal;white-space:pre;transform:scaleX(0.84);transform-origin:0 0">X</div>
<div style="position:absolute;left:353px;top:676.5px;width:236px;height:2px;background:linear-gradient(90deg,#f0f0f0,#fafafa 15px,#fafafa)"></div>
<svg style="left:360px;top:681.5px" width="10" height="10"><polyline points="7.5,1.5 3,5 7.5,8.5" fill="none" stroke="#555" stroke-width="2"/></svg>
<svg style="left:573px;top:681.5px" width="10" height="10"><polyline points="2.5,1.5 7,5 2.5,8.5" fill="none" stroke="#555" stroke-width="2"/></svg>
<div style="position:absolute;left:376.5px;top:677px;width:22px;height:19px;background:#cdcdcd"></div>
<div style="position:absolute;left:596px;top:675px;width:99px;height:24px;background:#fff;border:1px solid #7a7a7a"></div>
<div style="position:absolute;left:600px;top:681.74px;font-size:13.3px;line-height:13.3px;color:#000;font-weight:normal;white-space:pre;letter-spacing:0.020px;">10495.8</div>
<svg style="left:311px;top:710.5px" width="17" height="17"><circle cx="8.5" cy="8.5" r="7.6" fill="#fff" stroke="#505050" stroke-width="1.5"/></svg>
<div style="position:absolute;left:334.5px;top:713.17px;font-size:13.5px;line-height:13.5px;color:#000;font-weight:normal;white-space:pre;transform:scaleX(0.84);transform-origin:0 0">Y</div>
<div style="position:absolute;left:353px;top:709px;width:236px;height:2px;background:linear-gradient(90deg,#f0f0f0,#fafafa 15px,#fafafa)"></div>
<svg style="left:360px;top:714px" width="10" height="10"><polyline points="7.5,1.5 3,5 7.5,8.5" fill="none" stroke="#bdbdbd" stroke-width="1.4"/></svg>
<svg style="left:573px;top:714px" width="10" height="10"><polyline points="2.5,1.5 7,5 2.5,8.5" fill="none" stroke="#bdbdbd" stroke-width="1.4"/></svg>
<div style="position:absolute;left:596px;top:707px;width:99px;height:24px;background:#f0f0f0;border:1px solid #cfcfcf"></div>
<div style="position:absolute;left:600.2px;top:714.54px;font-size:13.3px;line-height:13.3px;color:#7f7f7f;font-weight:normal;white-space:pre;letter-spacing:-0.013px;">1900.75</div>
<svg style="left:311px;top:743.1px" width="17" height="17"><circle cx="8.5" cy="8.5" r="7.6" fill="#fff" stroke="#505050" stroke-width="1.5"/></svg>
<div style="position:absolute;left:334.5px;top:745.87px;font-size:13.5px;line-height:13.5px;color:#000;font-weight:normal;white-space:pre;transform:scaleX(0.84);transform-origin:0 0">Z</div>
<div style="position:absolute;left:353px;top:741.6px;width:236px;height:2px;background:linear-gradient(90deg,#f0f0f0,#fafafa 15px,#fafafa)"></div>
<svg style="left:360px;top:746.6px" width="10" height="10"><polyline points="7.5,1.5 3,5 7.5,8.5" fill="none" stroke="#bdbdbd" stroke-width="1.4"/></svg>
<svg style="left:573px;top:746.6px" width="10" height="10"><polyline points="2.5,1.5 7,5 2.5,8.5" fill="none" stroke="#bdbdbd" stroke-width="1.4"/></svg>
<div style="position:absolute;left:596px;top:739.6px;width:99px;height:24px;background:#f0f0f0;border:1px solid #cfcfcf"></div>
<div style="position:absolute;left:600.2px;top:747.24px;font-size:13.3px;line-height:13.3px;color:#7f7f7f;font-weight:normal;white-space:pre;letter-spacing:0.154px;">508.997</div>
<svg style="left:299px;top:784px" width="17" height="17"><rect x="0.6" y="0.6" width="15.8" height="15.8" fill="#fff" stroke="#333" stroke-width="1.2"/><polyline points="3,8.5 6.5,12 13.5,4" fill="none" stroke="#333" stroke-width="1.4"/></svg>
<div style="position:absolute;left:320.5px;top:786.57px;font-size:13.5px;line-height:13.5px;color:#000;font-weight:normal;white-space:pre;letter-spacing:-0.374px;">Range</div>
<div style="position:absolute;left:446px;top:781px;width:38px;height:25px;background:#fff;border:1px solid #7a7a7a"></div>
<div style="position:absolute;left:450px;top:788.24px;font-size:13.3px;line-height:13.3px;color:#000;font-weight:normal;white-space:pre;">10</div>
<div style="position:absolute;left:491.4px;top:788.27px;font-size:13.5px;line-height:13.5px;color:#000;font-weight:normal;white-space:pre;letter-spacing:0.139px;">Integration Steps</div>
<div style="position:absolute;left:604px;top:781px;width:100px;height:25px;background:#fff;border:1px solid #7a7a7a"></div>
<div style="position:absolute;left:608.5px;top:788.44px;font-size:13.3px;line-height:13.3px;color:#000;font-weight:normal;white-space:pre;letter-spacing:-0.6px">1000</div>
<div style="position:absolute;left:300px;top:815px;width:94px;height:26px;background:#e1e1e1;border:1px solid #adadad"></div>
<div style="position:absolute;left:311.5px;top:822.44px;font-size:13.3px;line-height:13.3px;color:#000;font-weight:normal;white-space:pre;letter-spacing:0.023px;">Load points</div>
<div style="position:absolute;left:404px;top:815px;width:93px;height:26px;background:#e1e1e1;border:1px solid #adadad"></div>
<div style="position:absolute;left:414.3px;top:822.44px;font-size:13.3px;line-height:13.3px;color:#000;font-weight:normal;white-space:pre;letter-spacing:0.052px;">Save points</div>
<div style="position:absolute;left:507px;top:815px;width:93px;height:26px;background:#e1e1e1;border:1px solid #adadad"></div>
<div style="position:absolute;left:537.4px;top:822.44px;font-size:13.3px;line-height:13.3px;color:#000;font-weight:normal;white-space:pre;letter-spacing:-0.370px;">Clear</div>
<div style="position:absolute;left:610px;top:815px;width:93px;height:26px;background:#e1e1e1;border:1px solid #adadad"></div>
<div style="position:absolute;left:636.2px;top:822.44px;font-size:13.3px;line-height:13.3px;color:#000;font-weight:normal;white-space:pre;letter-spacing:-0.318px;">Cancel</div>
<div style="position:absolute;left:605px;top:859px;width:98px;height:26px;background:#e1e1e1;border:1px solid #adadad"></div>
<div style="position:absolute;left:631px;top:865.44px;font-size:13.3px;line-height:13.3px;color:#000;font-weight:normal;white-space:pre;letter-spacing:-0.125px;">Render</div>
<div style="position:absolute;left:605px;top:902px;width:98px;height:26px;background:#e1e1e1;border:1px solid #adadad"></div>
<div style="position:absolute;left:637.3px;top:909.24px;font-size:13.3px;line-height:13.3px;color:#000;font-weight:normal;white-space:pre;letter-spacing:-0.500px;">Close</div>
<div style="position:absolute;left:298.8px;top:875.74px;font-size:13.3px;line-height:13.3px;color:#000;font-weight:normal;white-space:pre;letter-spacing:0.246px;">Add points : Shift + left mouse button</div>
<div style="position:absolute;left:298px;top:899.24px;font-size:13.3px;line-height:13.3px;color:#000;font-weight:normal;white-space:pre;letter-spacing:0.102px;">Del points : Shift + middle (scroll) mouse button</div>
<div style="position:absolute;left:281.5px;top:930px;width:2px;height:2px;background:#b4b4b4"></div>
<div style="position:absolute;left:281.5px;top:935px;width:2px;height:2px;background:#b4b4b4"></div>
<div style="position:absolute;left:281.5px;top:940px;width:2px;height:2px;background:#b4b4b4"></div>
<div style="position:absolute;left:281.5px;top:945px;width:2px;height:2px;background:#b4b4b4"></div>
<div style="position:absolute;left:0px;top:966px;width:1477px;height:3px;background:linear-gradient(#f4f4f4,#d8d8d8)"></div>
<div style="position:absolute;left:0px;top:969px;width:1477px;height:2px;background:#9f9f9f"></div>
<div style="position:absolute;left:0px;top:971px;width:1477px;height:2px;background:#f0f0f0"></div>
</body></html>
